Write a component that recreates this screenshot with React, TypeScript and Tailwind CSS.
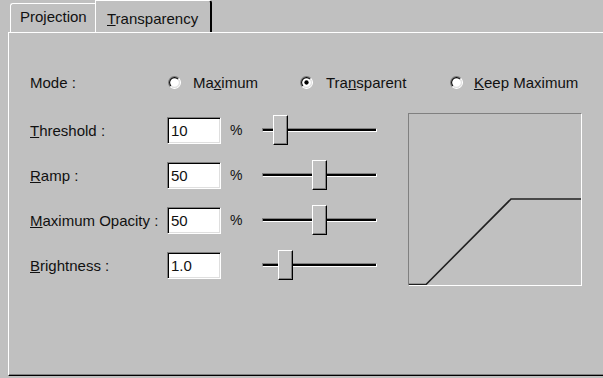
import React from "react";

const Radio = ({ checked }: { checked?: boolean }) => (
  <svg width="13" height="13" viewBox="0 0 12 12" className="shrink-0">
    <circle cx="6" cy="6" r="5" fill="#ffffff" />
    <path d="M9.9 2.1 A5.5 5.5 0 0 0 2.1 9.9" stroke="#808080" fill="none" />
    <path d="M9.2 2.8 A4.5 4.5 0 0 0 2.8 9.2" stroke="#000000" fill="none" />
    <path d="M9.9 2.1 A5.5 5.5 0 0 1 2.1 9.9" stroke="#ffffff" fill="none" />
    <path d="M9.2 2.8 A4.5 4.5 0 0 1 2.8 9.2" stroke="#dfdfdf" fill="none" />
    {checked && <circle cx="6" cy="6" r="2" fill="#000000" />}
  </svg>
);

const Field = ({ value }: { value: string }) => (
  <div className="w-[54px] h-[27px] bg-white border border-t-[#808080] border-l-[#808080] border-b-white border-r-white shadow-[inset_1px_1px_#000,inset_-1px_-1px_#dfdfdf] flex items-center pl-[3px] pt-[1px]">
    {value}
  </div>
);

const Slider = ({ thumb }: { thumb: string }) => (
  <div className="relative w-[115px] h-[30px]">
    <div className="absolute left-0 right-0 top-[13px] h-[4px] bg-black border border-t-[#808080] border-l-[#808080] border-b-white border-r-white" />
    <div
      className={`absolute top-0 w-[15px] h-[30px] bg-[#c0c0c0] border border-t-white border-l-white border-r-black border-b-black shadow-[inset_-1px_-1px_#808080] ${thumb}`}
    />
  </div>
);

const rows = [
  { key: "T", rest: "hreshold :", value: "10", pct: true, thumb: "left-[11px]" },
  { key: "R", rest: "amp :", value: "50", pct: true, thumb: "left-[50px]" },
  { key: "M", rest: "aximum Opacity :", value: "50", pct: true, thumb: "left-[50px]" },
  { key: "B", rest: "rightness :", value: "1.0", pct: false, thumb: "left-[16px]" },
];

export default function App() {
  return (
    <div className="w-[603px] h-[378px] overflow-hidden bg-[#c0c0c0] text-[15px] leading-none text-[#111] font-['Liberation_Sans',Arial,sans-serif]">
      {/* tab strip */}
      <div className="h-[32px] flex items-end pl-[10px]">
        <div className="w-[85px] h-[29px] border-t border-l border-white rounded-tl-[3px] flex items-center pl-[9px] pb-[3px]">
          Projection
        </div>
        <div className="w-[117px] h-[32px] border-t border-l border-white border-r-2 border-r-black rounded-tr-[3px] flex items-center pl-[11px] pt-[3px]">
          <span>
            <u>T</u>ransparency
          </span>
        </div>
      </div>

      {/* panel */}
      <div className="w-[600px] h-[344px] ml-[8px] border-t border-l border-white border-b border-b-black shadow-[inset_0_-1px_#808080] pl-[21px]">
        <div className="mt-[39px] h-[20px] flex items-center">
          <div className="w-[138px]">Mode :</div>
          <div className="w-[132px] flex items-center gap-[12px]">
            <Radio />
            <span>
              Ma<u>x</u>imum
            </span>
          </div>
          <div className="w-[150px] flex items-center gap-[13px]">
            <Radio checked />
            <span>
              Tra<u>n</u>sparent
            </span>
          </div>
          <div className="flex items-center gap-[11px]">
            <Radio />
            <span>
              <u>K</u>eep Maximum
            </span>
          </div>
        </div>

        <div className="mt-[21px] flex items-start">
          <div className="pt-[2px] flex flex-col gap-[15px]">
            {rows.map((r) => (
              <div key={r.key} className="h-[30px] flex items-center">
                <div className="w-[137px]">
                  <u>{r.key}</u>
                  {r.rest}
                </div>
                <Field value={r.value} />
                <div className="w-[41px] pl-[9px] text-[14px]">{r.pct ? "%" : ""}</div>
                <Slider thumb={r.thumb} />
              </div>
            ))}
          </div>

          <div className="ml-[31px] w-[174px] h-[173px] border border-t-[#808080] border-l-[#808080] border-b-white border-r-white">
            <svg width="172" height="171" viewBox="0 0 172 171">
              <polyline
                points="0,170.5 17,170.5 102,85 172,85"
                fill="none"
                stroke="#202020"
                strokeWidth="1.6"
              />
            </svg>
          </div>
        </div>
      </div>
    </div>
  );
}
